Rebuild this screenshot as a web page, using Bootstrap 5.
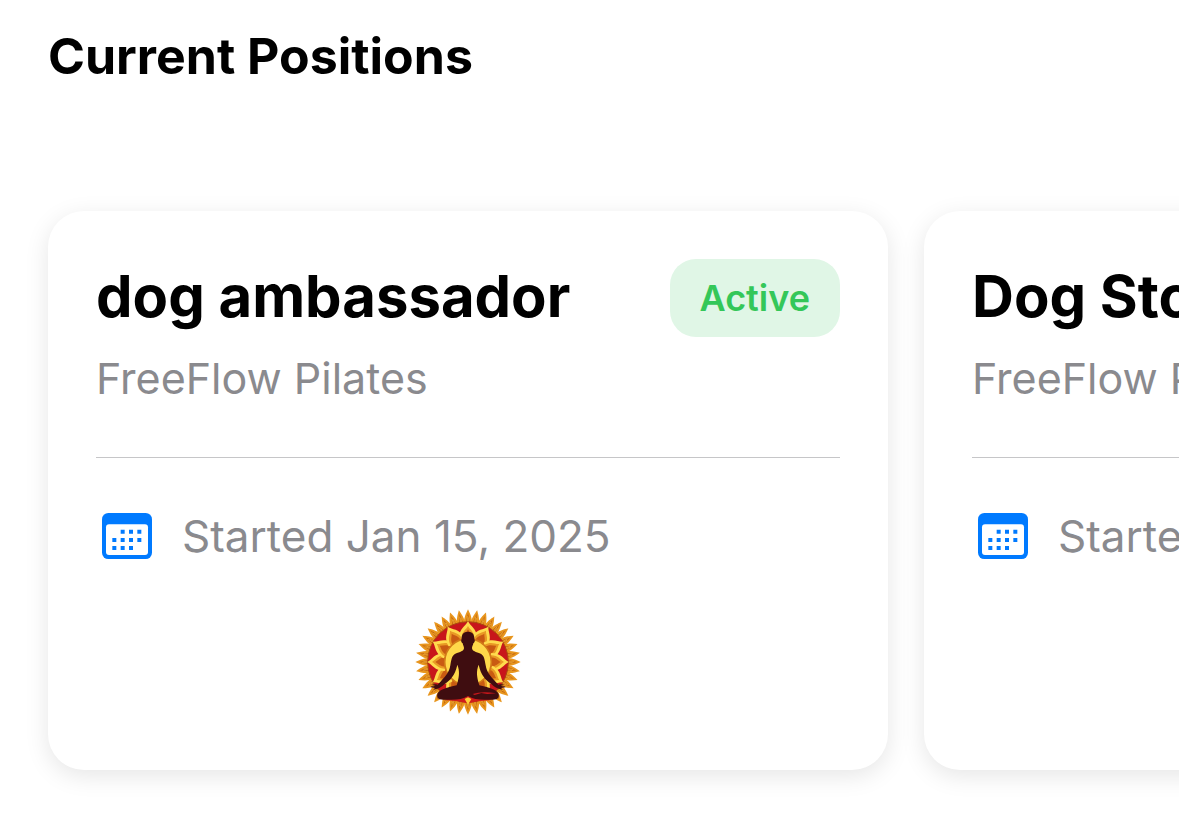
<!DOCTYPE html>
<html lang="en">
<head>
<meta charset="utf-8">
<meta name="viewport" content="width=device-width, initial-scale=1">
<title>Current Positions</title>
<link href="https://cdn.jsdelivr.net/npm/bootstrap@5.3.0/dist/css/bootstrap.min.css" rel="stylesheet">
<style>
  body { font-family: Inter, "Liberation Sans", sans-serif; color: #000; background: #fff; }
  .section-title { font-size: 50px; line-height: 60px; font-weight: 700; margin: 26px 0 0; }
  .page { padding-left: 48px; }
  .positions { gap: 36px; padding: 125px 48px 60px; margin-left: -48px; }
  .position-card {
    flex: 0 0 840px; min-height: 559px; padding: 48px; border: 0; border-radius: 36px;
    box-shadow: 0 6px 24px rgba(0, 0, 0, .1); color: #000;
  }
  .job { font-size: 58px; line-height: 74px; font-weight: 700; white-space: nowrap; }
  .company, .started { line-height: 56px; color: #8a8a8e; }
  .company { font-size: 43px; margin: 13px 0 0; }
  .started { font-size: 44px; }
  .status { font-size: 36px; line-height: 42px; font-weight: 600; padding: 18px 30px; border-radius: 26px; color: #34c759; background: #e0f6e6; }
  .rule { border-top: 1px solid #c6c6c8; opacity: 1; margin: 51px 0 50px; }
  .cal { width: 50px; height: 46px; margin: 0 30px 0 6px; }
  .logo { width: 120px; height: 120px; margin-top: 38px; }
</style>
</head>
<body>
<svg width="0" height="0" class="position-absolute" aria-hidden="true">
  <defs>
    <symbol id="calendar" viewBox="0 0 150 138">
      <rect width="150" height="138" rx="19" fill="#007aff"/>
      <rect x="12" y="34" width="126" height="92" rx="9" fill="#fff"/>
      <path fill="#007aff" d="M56 50h12v12h-12zM81 50h12v12h-12zM106 50h12v12h-12zM31 75h12v12h-12zM56 75h12v12h-12zM81 75h12v12h-12zM106 75h12v12h-12zM31 99h12v12h-12zM56 99h12v12h-12zM81 99h12v12h-12z"/>
    </symbol>
    <g id="ray">
      <path d="M0-158C-5-147-13-133-12-115H12C13-133 5-147 0-158Z" fill="#e8961e"/>
      <path d="M0-147C-2-136-6-128-5-118H5C6-128 2-136 0-147Z" fill="#c5650f"/>
      <path d="M-1-138v20M2-134v18" stroke="#f2b53a" stroke-width="2"/>
    </g>
    <g id="ray3"><use href="#ray" transform="rotate(-10)"/><use href="#ray"/><use href="#ray" transform="rotate(10)"/></g>
    <g id="petal">
      <path d="M0-122C-8-106-26-102-27-70L0-58 27-70C26-102 8-106 0-122Z" fill="#ffdb4d"/>
      <path d="M0-108C-6-96-20-92-20-68H20C20-92 6-96 0-108Z" fill="#e99a25"/>
      <path d="M0-98C-5-88-15-84-14-64H14C15-84 5-88 0-98Z" fill="#c95b12"/>
    </g>
    <symbol id="yoga" viewBox="-180 -180 360 360">
      <g>
        <use href="#ray3"/><use href="#ray3" transform="rotate(30)"/><use href="#ray3" transform="rotate(60)"/><use href="#ray3" transform="rotate(90)"/><use href="#ray3" transform="rotate(120)"/><use href="#ray3" transform="rotate(150)"/><use href="#ray3" transform="rotate(180)"/><use href="#ray3" transform="rotate(210)"/><use href="#ray3" transform="rotate(240)"/><use href="#ray3" transform="rotate(270)"/><use href="#ray3" transform="rotate(300)"/><use href="#ray3" transform="rotate(330)"/>
      </g>
      <circle r="121" fill="#c8161b" stroke="#a8490f" stroke-width="3"/>
      <g>
        <use href="#petal"/><use href="#petal" transform="rotate(30)"/><use href="#petal" transform="rotate(60)"/><use href="#petal" transform="rotate(90)"/><use href="#petal" transform="rotate(120)"/><use href="#petal" transform="rotate(150)"/><use href="#petal" transform="rotate(180)"/><use href="#petal" transform="rotate(210)"/><use href="#petal" transform="rotate(240)"/><use href="#petal" transform="rotate(270)"/><use href="#petal" transform="rotate(300)"/><use href="#petal" transform="rotate(330)"/>
      </g>
      <circle r="70" fill="#ffd84a" stroke="#d27a18" stroke-width="5"/>
      <path d="M-72 114Q0 86 72 114L30 118 0 124-30 118Z" fill="#d01b1b"/>
      <path d="M-10 111 0 106 10 111 0 128Z" fill="#ffcf3a"/>
      <path fill="#3f0d10" d="M0-91C-14-91-20-82-19-68C-22-66-20-57-16-56C-15-50-12-46-12-42C-12-33-24-30-38-25C-48-20-50-9-53 10C-56 30-68 44-80 56L-91 68C-98 66-107 66-108 69L-97 72C-106 73-113 72-112 76L-99 78L-104 83L-92 80C-84 78-78 74-70 66C-52 53-39 40-32 8C-24 28-27 43-31 60L-34 70C-60 76-88 83-92 96C-96 113-80 114-60 113C-36 114-15 112 0 102C15 112 36 114 60 113C80 114 96 113 92 96C88 83 60 76 34 70L31 60C27 43 24 28 32 8C39 40 52 53 70 66C78 74 84 78 92 80L104 83L99 78L112 76C113 72 106 73 97 72L108 69C107 66 98 66 91 68L80 56C68 44 56 30 53 10C50-9 48-20 38-25C24-30 12-33 12-42C12-46 15-50 16-56C20-57 22-66 19-68C20-82 14-91 0-91Z"/>
      <path d="M14 96Q42 87 84 94L58 96 40 93 20 99Z" fill="#c8161b"/>
    </symbol>
  </defs>
</svg>
<main class="page overflow-hidden">
  <h1 class="section-title">Current Positions</h1>
  <div class="positions d-flex">
    <article class="card position-card">
      <div class="d-flex justify-content-between align-items-start">
        <h2 class="job m-0">dog ambassador</h2>
        <span class="status">Active</span>
      </div>
      <p class="company">FreeFlow Pilates</p>
      <hr class="rule">
      <div class="started d-flex align-items-center">
        <svg class="cal flex-shrink-0" aria-hidden="true"><use href="#calendar"/></svg>
        <span>Started Jan 15, 2025</span>
      </div>
      <svg class="logo align-self-center" role="img" aria-label="FreeFlow Pilates"><use href="#yoga"/></svg>
    </article>
    <article class="card position-card">
      <div class="d-flex justify-content-between align-items-start">
        <h2 class="job m-0">Dog Store</h2>
        <span class="status">Active</span>
      </div>
      <p class="company">FreeFlow Pilates</p>
      <hr class="rule">
      <div class="started d-flex align-items-center">
        <svg class="cal flex-shrink-0" aria-hidden="true"><use href="#calendar"/></svg>
        <span>Started Jan 15, 2025</span>
      </div>
      <svg class="logo align-self-center" role="img" aria-label="FreeFlow Pilates"><use href="#yoga"/></svg>
    </article>
  </div>
</main>
<script src="https://cdn.jsdelivr.net/npm/bootstrap@5.3.0/dist/js/bootstrap.bundle.min.js"></script>
</body>
</html>
